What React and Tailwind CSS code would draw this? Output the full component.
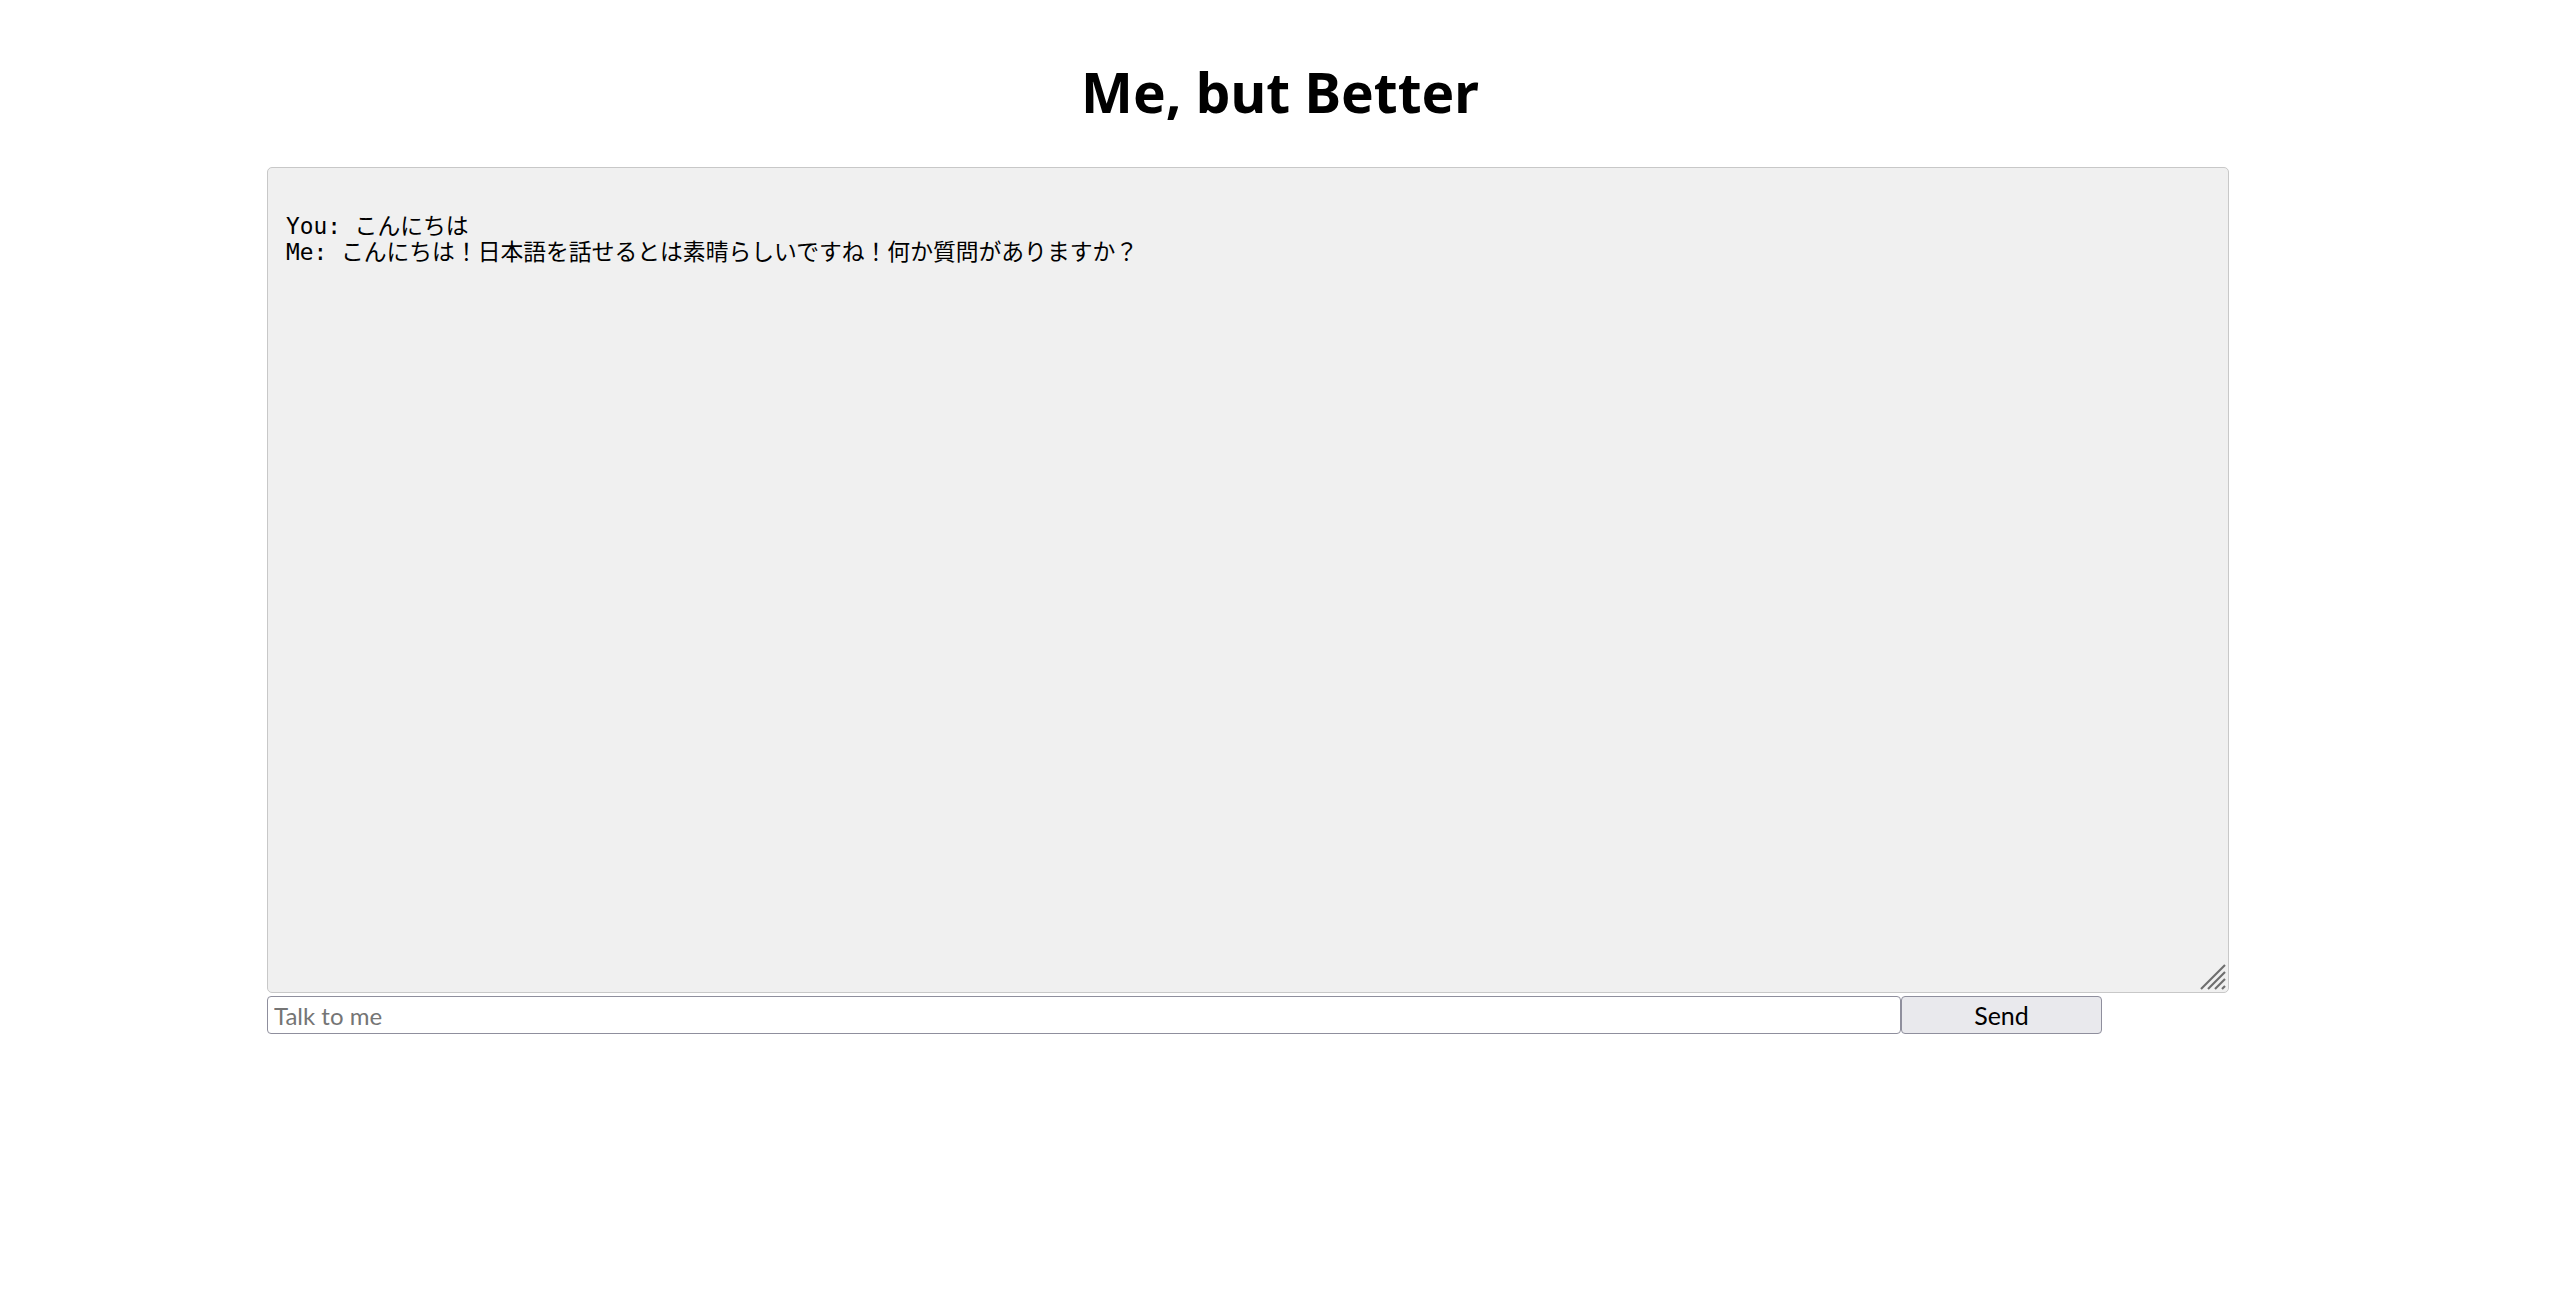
import { useState } from "react";

const ResizeGrip = () => (
  <svg
    width="28"
    height="28"
    viewBox="0 0 28 28"
    className="absolute right-[2px] bottom-[2px] pointer-events-none"
  >
    <g stroke="#6e6e6e" strokeWidth="2.2" strokeLinecap="butt">
      <line x1="2" y1="26" x2="26" y2="2" />
      <line x1="9" y1="26" x2="26" y2="9" />
      <line x1="16" y1="26" x2="26" y2="16" />
      <line x1="23" y1="26" x2="26" y2="23" />
    </g>
  </svg>
);

const App = () => {
  const [message, setMessage] = useState("");
  const log = "\nYou: こんにちは\nMe: こんにちは！日本語を話せるとは素晴らしいですね！何か質問がありますか？";

  return (
    <div className="min-h-screen bg-white">
      {/* Title */}
      <h1 className="pt-[64px] h-[120px] text-center text-[55px] leading-none font-bold text-black font-['Noto_Sans',sans-serif]">
        Me, but Better
      </h1>

      <div className="ml-[267px] w-[1962px] flex flex-col">
        {/* Chat log */}
        <div className="relative mt-[47px]">
          <textarea
            readOnly
            defaultValue={log}
            className="block w-[1962px] h-[826px] resize-none bg-[#f0f0f0] border border-[#c8c8c8] rounded-[5px] px-[18px] py-[19px] text-[22.8px] leading-[26px] text-black font-['DejaVu_Sans_Mono','Noto_Sans_CJK_JP',monospace] outline-none"
          />
          <ResizeGrip />
        </div>

        {/* Input row */}
        <div className="mt-[3px] flex items-stretch h-[38px]">
          <input
            type="text"
            value={message}
            onChange={(e) => setMessage(e.target.value)}
            placeholder="Talk to me"
            className="w-[1634px] h-full bg-white border border-[#8f8f9d] rounded-[4px] px-[6px] text-[24px] text-black placeholder:text-[#757575] font-['Lato',sans-serif] outline-none"
          />
          <button className="w-[201px] h-full bg-[#e9e9ed] border border-[#8f8f9d] rounded-[4px] text-[25px] text-black font-['Lato',sans-serif]">
            Send
          </button>
        </div>
      </div>
    </div>
  );
};

export default App;
